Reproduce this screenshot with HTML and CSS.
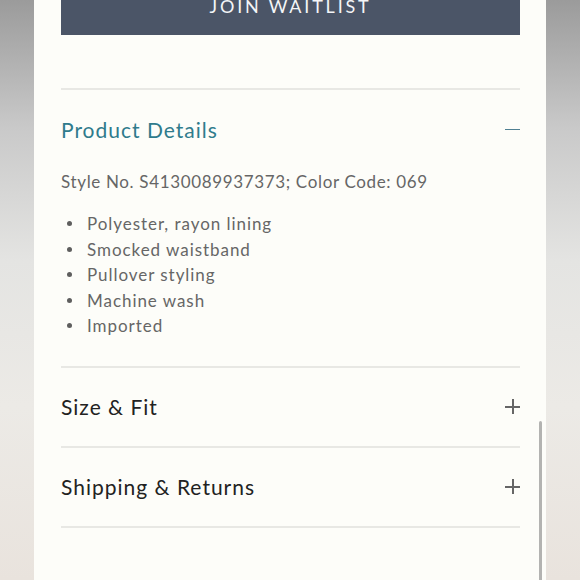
FILE: index.html
```html
<!DOCTYPE html>
<html>
<head>
<meta charset="utf-8">
<link rel="stylesheet" href="styles.css">
</head>
<body>
<div class="panel">
  <button class="waitlist">JOIN WAITLIST</button>
  <div class="spacer"></div>
  <section class="acc open">
    <div class="acc-head">
      <h2 class="acc-title teal">Product Details</h2>
      <span class="icon minus"></span>
    </div>
    <p class="style-no">Style No. S4130089937373; Color Code: 069</p>
    <ul class="features">
      <li>Polyester, rayon lining</li>
      <li>Smocked waistband</li>
      <li>Pullover styling</li>
      <li>Machine wash</li>
      <li>Imported</li>
    </ul>
  </section>
  <section class="acc">
    <div class="acc-head">
      <h2 class="acc-title">Size &amp; Fit</h2>
      <span class="icon plus"></span>
    </div>
  </section>
  <section class="acc">
    <div class="acc-head">
      <h2 class="acc-title">Shipping &amp; Returns</h2>
      <span class="icon plus"></span>
    </div>
  </section>
  <div class="bottom-line"></div>
</div>
<div class="scrollbar"></div>
</body>
</html>
```

FILE: styles.css
```css
html, body {
  margin: 0;
  padding: 0;
  height: 580px;
  overflow: hidden;
}
body {
  background: linear-gradient(180deg, #9b9b9b 0%, #c9c9c9 22%, #e4e4e2 45%, #eceae6 70%, #e9e3dd 100%);
  font-family: "Lato", "Noto Sans", sans-serif;
  position: relative;
}
.panel {
  width: 512px;
  margin: 0 34px;
  height: 620px;
  background: #fdfdf9;
  box-sizing: border-box;
  padding: 0 26px 0 27px;
}
.waitlist {
  display: flex;
  align-items: center;
  justify-content: center;
  width: 100%;
  height: 59px;
  margin-top: -24px;
  border: 0;
  background: #4b5567;
  color: #f4f5f7;
  font-family: inherit;
  font-size: 18px;
  letter-spacing: 2.8px;
  font-weight: 400;
  padding: 0;
}
.spacer {
  height: 53px;
}
.acc {
  border-top: 2px solid #e8e8e4;
}
.acc-head {
  display: flex;
  align-items: center;
  justify-content: space-between;
  height: 78px;
}
.acc-title {
  margin: 0;
  font-weight: 400;
  font-size: 21px;
  letter-spacing: 1px;
  color: #222;
}
.acc-title.teal {
  color: #2f7b8c;
}
.icon {
  position: relative;
  width: 15px;
  height: 15px;
}
.icon::before, .icon::after {
  content: "";
  position: absolute;
  background: #666;
}
.icon::before {
  left: 0;
  right: 0;
  top: 7px;
  height: 1.5px;
}
.plus::after {
  top: 0;
  bottom: 0;
  left: 7px;
  width: 1.5px;
}
.minus::before {
  background: #4f7f92;
}
.style-no {
  margin: 4px 0 19px;
  font-size: 17px;
  color: #666;
  letter-spacing: 0.65px;
  line-height: 20px;
}
.features {
  margin: 0;
  padding: 0 0 27px 6px;
  list-style: none;
  color: #666;
  font-size: 17px;
  letter-spacing: 0.95px;
  line-height: 25.5px;
}
.features li {
  display: flex;
  align-items: center;
  gap: 15px;
}
.features li::before {
  content: "";
  width: 5px;
  height: 5px;
  border-radius: 50%;
  background: #5e5e5e;
  flex: none;
}
.bottom-line {
  border-top: 2px solid #e8e8e4;
}
.scrollbar {
  position: absolute;
  left: 539px;
  top: 421px;
  width: 3px;
  height: 170px;
  border-radius: 2px;
  background: #b3b3b1;
}
```
